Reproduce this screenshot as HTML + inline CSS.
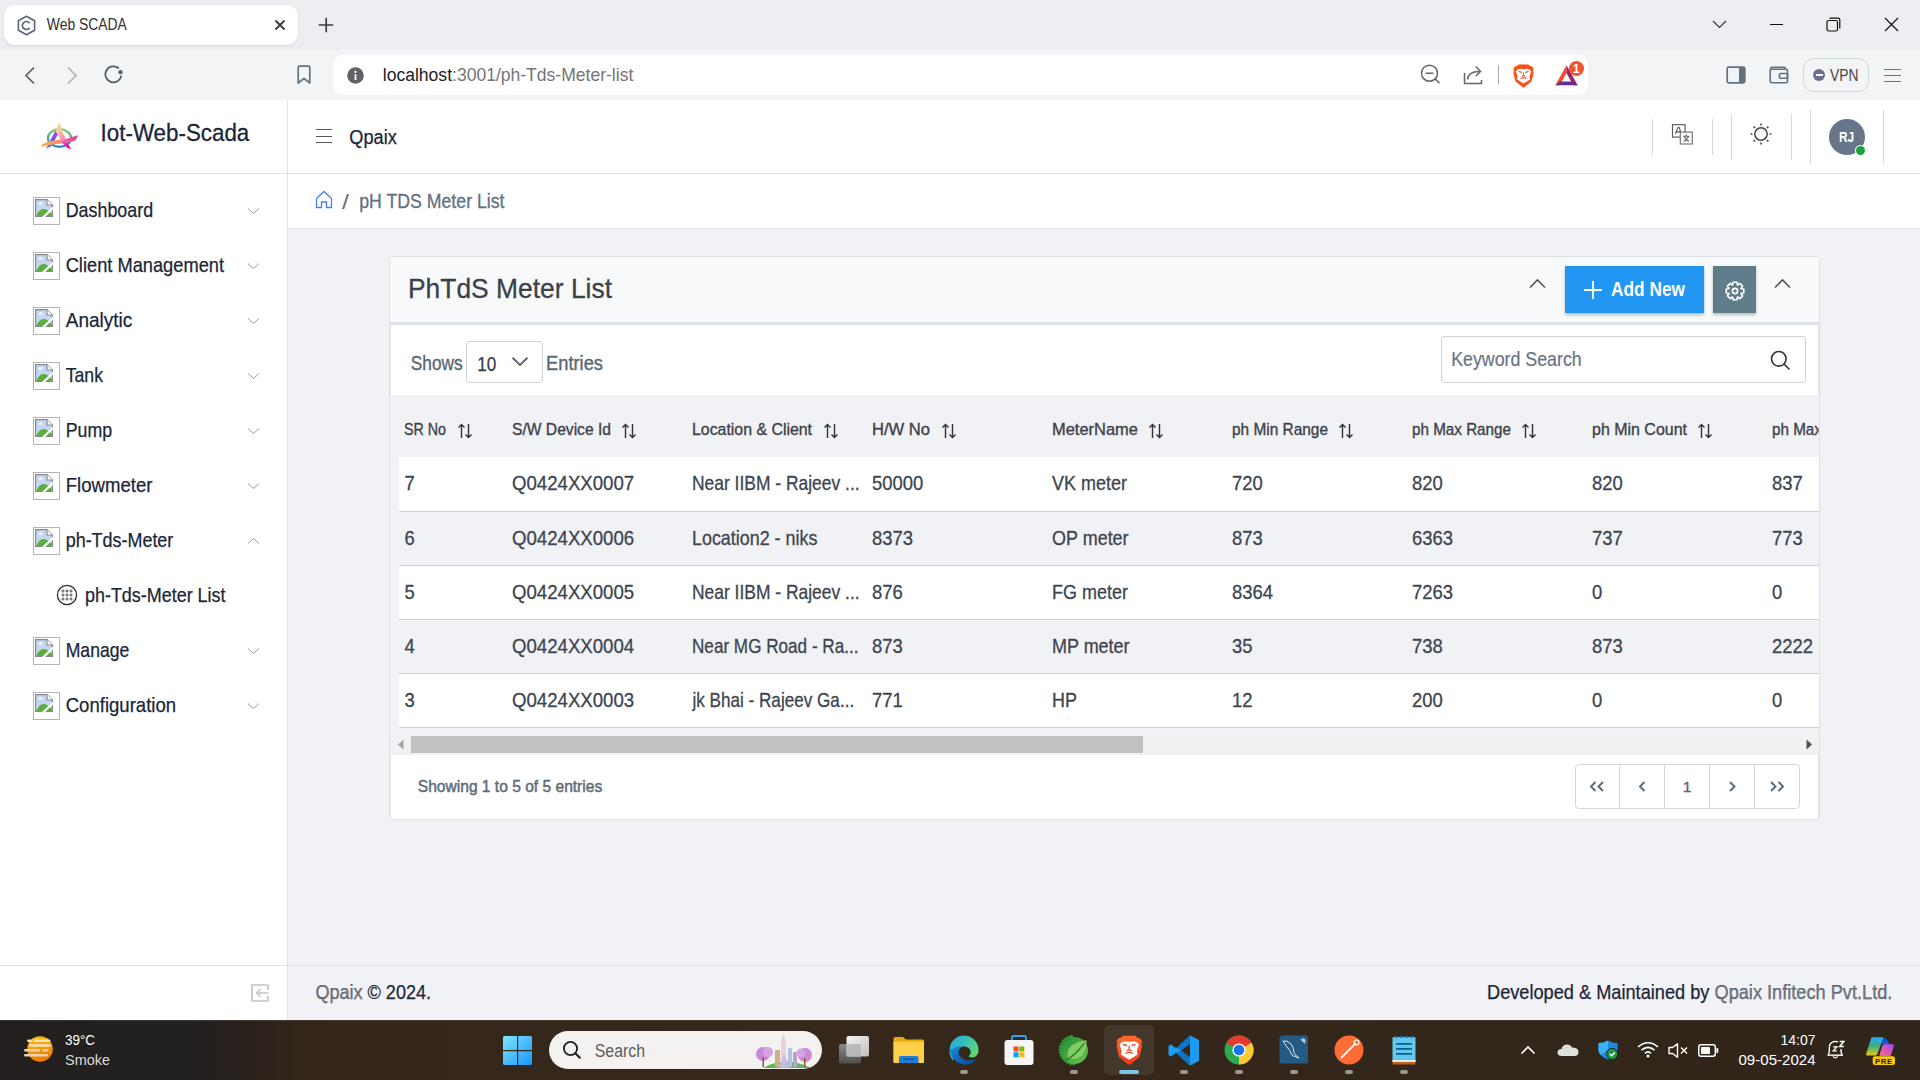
<!DOCTYPE html>
<html><head><meta charset="utf-8">
<style>
*{margin:0;padding:0;box-sizing:border-box}
html,body{width:1920px;height:1080px;overflow:hidden;font-family:"Liberation Sans",sans-serif;background:#f1f2f6;position:relative}
.a{position:absolute}
.t{position:absolute;white-space:nowrap;line-height:1}
svg{position:absolute;overflow:visible}

</style></head><body>
<div class="a" style="left:0px;top:0px;width:1920px;height:50px;background:#eceef2;"></div>
<div class="a" style="left:0px;top:50px;width:1920px;height:50px;background:#f3f4f6;"></div>
<div class="a" style="left:4px;top:5px;width:294px;height:40px;background:#fff;border-radius:11px;box-shadow:0 1px 3px rgba(0,0,0,.10)"></div>
<svg style="left:17px;top:15px" width="19" height="21" viewBox="0 0 19 21"><path d="M9.5 1.2 L17.6 5.8 V15.2 L9.5 19.8 L1.4 15.2 V5.8 Z" fill="none" stroke="#5b6478" stroke-width="1.6" stroke-linejoin="round"/><path d="M12.6 8.2 A4 4 0 1 0 12.6 12.8" fill="none" stroke="#5b6478" stroke-width="1.7"/></svg>
<svg style="left:274px;top:19px" width="12" height="12" viewBox="0 0 12 12"><path d="M1.5 1.5 L10.5 10.5 M10.5 1.5 L1.5 10.5" stroke="#3a3d42" stroke-width="1.9"/></svg>
<svg style="left:318px;top:17px" width="16" height="16" viewBox="0 0 16 16"><path d="M8.2 0.8 V15.2 M0.8 8 H15.2" stroke="#3a3d42" stroke-width="1.7"/></svg>
<svg style="left:1712px;top:20px" width="15" height="9" viewBox="0 0 15 9"><path d="M1 1 L7.5 7.5 L14 1" fill="none" stroke="#333" stroke-width="1.2"/></svg>
<div class="a" style="left:1770px;top:24px;width:13px;height:1.3px;background:#111;"></div>
<svg style="left:1826px;top:17px" width="15" height="15" viewBox="0 0 15 15"><rect x="1" y="3.5" width="10.5" height="10.5" rx="1.8" fill="none" stroke="#111" stroke-width="1.2"/><path d="M3.5 1.2 H11.8 A2 2 0 0 1 13.8 3.2 V11.5" fill="none" stroke="#111" stroke-width="1.2"/></svg>
<svg style="left:1884px;top:17px" width="15" height="15" viewBox="0 0 15 15"><path d="M1 1 L14 14 M14 1 L1 14" stroke="#111" stroke-width="1.2"/></svg>
<svg style="left:24px;top:66px" width="12" height="19" viewBox="0 0 12 19"><path d="M10 1.5 L2 9.5 L10 17.5" fill="none" stroke="#4f5f68" stroke-width="1.7"/></svg>
<svg style="left:66px;top:66px" width="12" height="19" viewBox="0 0 12 19"><path d="M2 1.5 L10 9.5 L2 17.5" fill="none" stroke="#aab4ba" stroke-width="1.7"/></svg>
<svg style="left:103px;top:64px" width="22" height="22" viewBox="0 0 22 22"><path d="M18.3 11.5 A8 8 0 1 1 15.8 4.5" fill="none" stroke="#4f5f68" stroke-width="1.7"/><circle cx="17.5" cy="8.2" r="2.1" fill="#4f5f68"/></svg>
<svg style="left:296px;top:65px" width="16" height="20" viewBox="0 0 16 20"><path d="M2.2 2.5 Q2.2 1.2 3.5 1.2 H12.5 Q13.8 1.2 13.8 2.5 V18 L8 13.5 L2.2 18 Z" fill="none" stroke="#5f7480" stroke-width="1.7" stroke-linejoin="round"/></svg>
<div class="a" style="left:333px;top:55px;width:1255px;height:40px;background:#fff;border-radius:10px"></div>
<svg style="left:347px;top:67px" width="18" height="18" viewBox="0 0 18 18"><circle cx="8.5" cy="8.5" r="8.3" fill="#5f6368"/><rect x="7.6" y="7.2" width="1.8" height="5.8" fill="#fff"/><circle cx="8.5" cy="4.9" r="1.1" fill="#fff"/></svg>
<svg style="left:1419px;top:63px" width="22" height="22" viewBox="0 0 22 22"><circle cx="10.5" cy="10.2" r="8" fill="none" stroke="#666" stroke-width="1.5"/><path d="M6.6 10.2 H14.4 M16.2 15.9 L20.5 20.2" stroke="#666" stroke-width="1.5"/></svg>
<svg style="left:1462px;top:64px" width="22" height="22" viewBox="0 0 22 22"><path d="M2.5 9 V19.5 H19.5 V16" fill="none" stroke="#666" stroke-width="1.5" stroke-linejoin="round"/><path d="M5.5 15.5 Q6 7.5 17.5 7.5" fill="none" stroke="#666" stroke-width="1.5"/><path d="M13.8 2.5 L18.5 7.5 L13.8 12" fill="none" stroke="#666" stroke-width="1.5"/></svg>
<div class="a" style="left:1498px;top:65px;width:1.3px;height:19px;background:#aaa;"></div>
<svg style="left:1512.5px;top:63.5px" width="21" height="24" viewBox="0 0 21 24"><path d="M5.5 0.5 H15.5 L17 2 L19.2 2.6 L20.6 4.8 L20 7 L20.6 9 L18.5 17.5 L11.2 23.2 Q10.5 23.8 9.8 23.2 L2.5 17.5 L0.4 9 L1 7 L0.4 4.8 L1.8 2.6 L4 2 Z" fill="#fb4f14"/><path d="M2.8 7.2 Q5 4.5 7.5 4.8 Q10.5 5.6 13.5 4.8 Q16 4.5 18.2 7.2 L16.5 12.5 L17 15.5 L10.5 19.5 L4 15.5 L4.5 12.5 Z" fill="#fff"/><path d="M5.5 7.5 L8.8 8.3 M15.5 7.5 L12.2 8.3" stroke="#fb4f14" stroke-width="1.2"/><path d="M10.5 8.5 V12 M8.5 12.5 L10.5 11.5 L12.5 12.5 M7.5 14.5 L10.5 13.5 L13.5 14.5" fill="none" stroke="#fb4f14" stroke-width="1.1"/></svg>
<svg style="left:1554.5px;top:64.8px" width="23" height="20.5" viewBox="0 0 23 20.5"><path d="M11.5 0.3 L0.3 20.2 H4.8 L11.5 8 Z" fill="#ff4724"/><path d="M11.5 0.3 L22.7 20.2 H18.2 L11.5 8 Z" fill="#9e1f63"/><path d="M0.3 20.2 L4.8 16.4 H18.2 L22.7 20.2 Z" fill="#662d91"/></svg>
<div class="a" style="left:1568.7px;top:60.5px;width:15px;height:15px;border-radius:50%;background:#f4532c"></div>
<svg style="left:1726px;top:66px" width="20" height="18" viewBox="0 0 20 18"><rect x="1.2" y="1.2" width="17.6" height="15.6" rx="1.5" fill="none" stroke="#5f7480" stroke-width="1.7"/><rect x="13" y="1.2" width="5.8" height="15.6" fill="#5f7480"/></svg>
<svg style="left:1769px;top:66px" width="20" height="18" viewBox="0 0 20 18"><rect x="1.2" y="3.2" width="17.3" height="13.6" rx="1.5" fill="none" stroke="#5f7480" stroke-width="1.6"/><path d="M1.5 3.5 Q1.5 1.2 3.5 1.2 H15 Q16.5 1.2 16.5 3" fill="none" stroke="#5f7480" stroke-width="1.6"/><rect x="10.5" y="7.5" width="8" height="4.8" rx="1" fill="none" stroke="#5f7480" stroke-width="1.6"/></svg>
<div class="a" style="left:1803px;top:58px;width:66px;height:34px;background:transparent;border:1px solid #ccdadf;border-radius:11px"></div>
<div class="a" style="left:1813px;top:69px;width:12px;height:12px;border-radius:50%;background:#6b6f93"></div>
<div class="a" style="left:1815.5px;top:74.2px;width:7px;height:2px;background:#fff;"></div>
<div class="a" style="left:1884px;top:68.5px;width:17px;height:1.5px;background:#60757e;"></div>
<div class="a" style="left:1884px;top:74.5px;width:17px;height:1.5px;background:#60757e;"></div>
<div class="a" style="left:1884px;top:80.5px;width:17px;height:1.5px;background:#60757e;"></div>
<div class="a" style="left:0px;top:100px;width:1920px;height:73px;background:#fff;"></div>
<div class="a" style="left:0px;top:173px;width:1920px;height:1px;background:#dfe3ea;"></div>
<div class="a" style="left:287px;top:100px;width:1px;height:920px;background:#dfe3ea;"></div>
<svg style="left:38px;top:118px" width="44" height="36" viewBox="0 0 44 36">
<defs><linearGradient id="lg_ring" x1="0" y1="0" x2="0" y2="1"><stop offset="0" stop-color="#86c46e"/><stop offset=".55" stop-color="#4aa58c"/><stop offset="1" stop-color="#2388c8"/></linearGradient>
<linearGradient id="lg_left" x1="0" y1="0" x2="0" y2="1"><stop offset="0" stop-color="#9b4dff"/><stop offset=".6" stop-color="#6a4fe0"/><stop offset="1" stop-color="#2f9bff"/></linearGradient>
<linearGradient id="lg_right" x1="0" y1="0" x2="0.3" y2="1"><stop offset="0" stop-color="#ffe27a"/><stop offset=".35" stop-color="#fdc3a0"/><stop offset=".7" stop-color="#f58ab8"/><stop offset="1" stop-color="#e010b0"/></linearGradient>
<linearGradient id="lg_sw" x1="0" y1="0" x2="1" y2="0"><stop offset="0" stop-color="#ffb23a"/><stop offset=".5" stop-color="#ff8a6a"/><stop offset=".75" stop-color="#f3559e"/><stop offset="1" stop-color="#e83a9a"/></linearGradient></defs>
<ellipse cx="21.5" cy="20" rx="11.6" ry="8.8" fill="none" stroke="url(#lg_ring)" stroke-width="2.2"/>
<path d="M17.4 12.6 L19.8 16.5 L13.5 28 L8 31 Z" fill="url(#lg_left)"/>
<path d="M3 27.6 Q7 23.5 17 22.3 L27 21.2 L39.6 17.2 Q39.5 21 36 23 Q30 24.8 22 25.6 Q12 26.6 4.2 28.8 Z" fill="url(#lg_sw)"/>
<path d="M21 4.8 Q22.5 6 23.6 11.5 L29.2 24.5 L33.4 31.2 Q31 30.8 29 29.8 L24.2 25 L18 12.6 Q19.5 7.5 21 4.8 Z" fill="url(#lg_right)"/>
</svg>
<div class="a" style="left:316px;top:129px;width:16px;height:1.4px;background:#555;"></div>
<div class="a" style="left:316px;top:135.5px;width:16px;height:1.4px;background:#555;"></div>
<div class="a" style="left:316px;top:142px;width:16px;height:1.4px;background:#555;"></div>
<div class="a" style="left:1652px;top:119px;width:1px;height:36px;background:#d9d9d9;"></div>
<div class="a" style="left:1712px;top:119px;width:1px;height:36px;background:#d9d9d9;"></div>
<div class="a" style="left:1731px;top:114px;width:1px;height:46px;background:#d9d9d9;"></div>
<div class="a" style="left:1791px;top:114px;width:1px;height:46px;background:#d9d9d9;"></div>
<div class="a" style="left:1810px;top:110px;width:1px;height:54px;background:#d9d9d9;"></div>
<div class="a" style="left:1883px;top:110px;width:1px;height:54px;background:#d9d9d9;"></div>
<svg style="left:1671px;top:123px" width="23" height="23" viewBox="0 0 23 23"><rect x="1.5" y="1.7" width="12.6" height="12.4" fill="#fff" stroke="#5a5a5a" stroke-width="1.15"/><path d="M4.3 10.8 L7 4.6 Q7.6 3.8 8.2 4.6 L9.6 8.6 M5.3 8.9 H9.7" fill="none" stroke="#555" stroke-width="1.1"/><rect x="9.3" y="9.1" width="12" height="11.9" fill="#fff" stroke="#777" stroke-width="1.2"/><path d="M15.2 11.2 V12.8 M12.2 13.3 H18.6 M13.4 13.7 Q15 17.5 18 18.4 M17.3 13.7 Q15.8 17.5 12.6 18.4" fill="none" stroke="#6a6a6a" stroke-width="1.1"/></svg>
<svg style="left:1750px;top:123px" width="22" height="22" viewBox="0 0 22 22"><circle cx="11" cy="11" r="6.2" fill="none" stroke="#444" stroke-width="1.5"/><path d="M19.60 11.00 L21.40 11.00" stroke="#444" stroke-width="1.6"/><path d="M17.08 17.08 L18.35 18.35" stroke="#444" stroke-width="1.6"/><path d="M11.00 19.60 L11.00 21.40" stroke="#444" stroke-width="1.6"/><path d="M4.92 17.08 L3.65 18.35" stroke="#444" stroke-width="1.6"/><path d="M2.40 11.00 L0.60 11.00" stroke="#444" stroke-width="1.6"/><path d="M4.92 4.92 L3.65 3.65" stroke="#444" stroke-width="1.6"/><path d="M11.00 2.40 L11.00 0.60" stroke="#444" stroke-width="1.6"/><path d="M17.08 4.92 L18.35 3.65" stroke="#444" stroke-width="1.6"/></svg>
<div class="a" style="left:1829px;top:119px;width:36px;height:36px;border-radius:50%;background:#67768a"></div>
<div class="a" style="left:1855.5px;top:145.5px;width:9px;height:9px;border-radius:50%;background:#1d9e3c;box-shadow:0 0 0 1px #fff"></div>
<div class="a" style="left:0px;top:174px;width:287px;height:846px;background:#fff;"></div>
<div class="a" style="left:33px;top:197.0px;width:27px;height:28px;border:1px solid #b4b4b4;background:#fff"></div>
<svg style="left:35px;top:199.0px" width="18" height="18" viewBox="0 0 18 18"><path d="M0.6 0.6 H12 L17.4 6 V17.4 H0.6 Z" fill="#c3d6f2" stroke="#8a8a8a" stroke-width="1.2"/><path d="M12 0.6 V6 H17.4" fill="#fff" stroke="#8a8a8a" stroke-width="1.2"/><path d="M1.2 17 Q4.5 9.5 9 10 Q13 10.5 16.8 15 V17 H1.2 Z" fill="#5aaf3a"/><path d="M2.8 5.5 L5.5 2.8 L8.2 5.5 Z" fill="#fff"/><path d="M8 18.5 L18.5 8.5" stroke="#fff" stroke-width="2.2"/></svg>
<svg style="left:247px;top:206.8px" width="13" height="8" viewBox="0 0 13 8"><path d="M1 1.5 L6.5 6.5 L12 1.5" fill="none" stroke="#9a9a9a" stroke-width="1"/></svg>
<div class="a" style="left:33px;top:252.0px;width:27px;height:28px;border:1px solid #b4b4b4;background:#fff"></div>
<svg style="left:35px;top:254.0px" width="18" height="18" viewBox="0 0 18 18"><path d="M0.6 0.6 H12 L17.4 6 V17.4 H0.6 Z" fill="#c3d6f2" stroke="#8a8a8a" stroke-width="1.2"/><path d="M12 0.6 V6 H17.4" fill="#fff" stroke="#8a8a8a" stroke-width="1.2"/><path d="M1.2 17 Q4.5 9.5 9 10 Q13 10.5 16.8 15 V17 H1.2 Z" fill="#5aaf3a"/><path d="M2.8 5.5 L5.5 2.8 L8.2 5.5 Z" fill="#fff"/><path d="M8 18.5 L18.5 8.5" stroke="#fff" stroke-width="2.2"/></svg>
<svg style="left:247px;top:261.8px" width="13" height="8" viewBox="0 0 13 8"><path d="M1 1.5 L6.5 6.5 L12 1.5" fill="none" stroke="#9a9a9a" stroke-width="1"/></svg>
<div class="a" style="left:33px;top:307.0px;width:27px;height:28px;border:1px solid #b4b4b4;background:#fff"></div>
<svg style="left:35px;top:309.0px" width="18" height="18" viewBox="0 0 18 18"><path d="M0.6 0.6 H12 L17.4 6 V17.4 H0.6 Z" fill="#c3d6f2" stroke="#8a8a8a" stroke-width="1.2"/><path d="M12 0.6 V6 H17.4" fill="#fff" stroke="#8a8a8a" stroke-width="1.2"/><path d="M1.2 17 Q4.5 9.5 9 10 Q13 10.5 16.8 15 V17 H1.2 Z" fill="#5aaf3a"/><path d="M2.8 5.5 L5.5 2.8 L8.2 5.5 Z" fill="#fff"/><path d="M8 18.5 L18.5 8.5" stroke="#fff" stroke-width="2.2"/></svg>
<svg style="left:247px;top:316.8px" width="13" height="8" viewBox="0 0 13 8"><path d="M1 1.5 L6.5 6.5 L12 1.5" fill="none" stroke="#9a9a9a" stroke-width="1"/></svg>
<div class="a" style="left:33px;top:362.0px;width:27px;height:28px;border:1px solid #b4b4b4;background:#fff"></div>
<svg style="left:35px;top:364.0px" width="18" height="18" viewBox="0 0 18 18"><path d="M0.6 0.6 H12 L17.4 6 V17.4 H0.6 Z" fill="#c3d6f2" stroke="#8a8a8a" stroke-width="1.2"/><path d="M12 0.6 V6 H17.4" fill="#fff" stroke="#8a8a8a" stroke-width="1.2"/><path d="M1.2 17 Q4.5 9.5 9 10 Q13 10.5 16.8 15 V17 H1.2 Z" fill="#5aaf3a"/><path d="M2.8 5.5 L5.5 2.8 L8.2 5.5 Z" fill="#fff"/><path d="M8 18.5 L18.5 8.5" stroke="#fff" stroke-width="2.2"/></svg>
<svg style="left:247px;top:371.8px" width="13" height="8" viewBox="0 0 13 8"><path d="M1 1.5 L6.5 6.5 L12 1.5" fill="none" stroke="#9a9a9a" stroke-width="1"/></svg>
<div class="a" style="left:33px;top:417.0px;width:27px;height:28px;border:1px solid #b4b4b4;background:#fff"></div>
<svg style="left:35px;top:419.0px" width="18" height="18" viewBox="0 0 18 18"><path d="M0.6 0.6 H12 L17.4 6 V17.4 H0.6 Z" fill="#c3d6f2" stroke="#8a8a8a" stroke-width="1.2"/><path d="M12 0.6 V6 H17.4" fill="#fff" stroke="#8a8a8a" stroke-width="1.2"/><path d="M1.2 17 Q4.5 9.5 9 10 Q13 10.5 16.8 15 V17 H1.2 Z" fill="#5aaf3a"/><path d="M2.8 5.5 L5.5 2.8 L8.2 5.5 Z" fill="#fff"/><path d="M8 18.5 L18.5 8.5" stroke="#fff" stroke-width="2.2"/></svg>
<svg style="left:247px;top:426.8px" width="13" height="8" viewBox="0 0 13 8"><path d="M1 1.5 L6.5 6.5 L12 1.5" fill="none" stroke="#9a9a9a" stroke-width="1"/></svg>
<div class="a" style="left:33px;top:472.0px;width:27px;height:28px;border:1px solid #b4b4b4;background:#fff"></div>
<svg style="left:35px;top:474.0px" width="18" height="18" viewBox="0 0 18 18"><path d="M0.6 0.6 H12 L17.4 6 V17.4 H0.6 Z" fill="#c3d6f2" stroke="#8a8a8a" stroke-width="1.2"/><path d="M12 0.6 V6 H17.4" fill="#fff" stroke="#8a8a8a" stroke-width="1.2"/><path d="M1.2 17 Q4.5 9.5 9 10 Q13 10.5 16.8 15 V17 H1.2 Z" fill="#5aaf3a"/><path d="M2.8 5.5 L5.5 2.8 L8.2 5.5 Z" fill="#fff"/><path d="M8 18.5 L18.5 8.5" stroke="#fff" stroke-width="2.2"/></svg>
<svg style="left:247px;top:481.8px" width="13" height="8" viewBox="0 0 13 8"><path d="M1 1.5 L6.5 6.5 L12 1.5" fill="none" stroke="#9a9a9a" stroke-width="1"/></svg>
<div class="a" style="left:33px;top:527.0px;width:27px;height:28px;border:1px solid #b4b4b4;background:#fff"></div>
<svg style="left:35px;top:529.0px" width="18" height="18" viewBox="0 0 18 18"><path d="M0.6 0.6 H12 L17.4 6 V17.4 H0.6 Z" fill="#c3d6f2" stroke="#8a8a8a" stroke-width="1.2"/><path d="M12 0.6 V6 H17.4" fill="#fff" stroke="#8a8a8a" stroke-width="1.2"/><path d="M1.2 17 Q4.5 9.5 9 10 Q13 10.5 16.8 15 V17 H1.2 Z" fill="#5aaf3a"/><path d="M2.8 5.5 L5.5 2.8 L8.2 5.5 Z" fill="#fff"/><path d="M8 18.5 L18.5 8.5" stroke="#fff" stroke-width="2.2"/></svg>
<svg style="left:247px;top:536.8px" width="13" height="8" viewBox="0 0 13 8"><path d="M1 6.5 L6.5 1.5 L12 6.5" fill="none" stroke="#9a9a9a" stroke-width="1"/></svg>
<svg style="left:56px;top:583.5px" width="22" height="22" viewBox="0 0 22 22"><circle cx="11" cy="11" r="9.6" fill="none" stroke="#2b2f36" stroke-width="1.3"/><circle cx="7" cy="7" r="1.05" fill="none" stroke="#2b2f36" stroke-width=".8"/><circle cx="7" cy="11" r="1.05" fill="none" stroke="#2b2f36" stroke-width=".8"/><circle cx="7" cy="15" r="1.05" fill="none" stroke="#2b2f36" stroke-width=".8"/><circle cx="11" cy="7" r="1.05" fill="none" stroke="#2b2f36" stroke-width=".8"/><circle cx="11" cy="11" r="1.05" fill="none" stroke="#2b2f36" stroke-width=".8"/><circle cx="11" cy="15" r="1.05" fill="none" stroke="#2b2f36" stroke-width=".8"/><circle cx="15" cy="7" r="1.05" fill="none" stroke="#2b2f36" stroke-width=".8"/><circle cx="15" cy="11" r="1.05" fill="none" stroke="#2b2f36" stroke-width=".8"/><circle cx="15" cy="15" r="1.05" fill="none" stroke="#2b2f36" stroke-width=".8"/></svg>
<div class="a" style="left:33px;top:637.0px;width:27px;height:28px;border:1px solid #b4b4b4;background:#fff"></div>
<svg style="left:35px;top:639.0px" width="18" height="18" viewBox="0 0 18 18"><path d="M0.6 0.6 H12 L17.4 6 V17.4 H0.6 Z" fill="#c3d6f2" stroke="#8a8a8a" stroke-width="1.2"/><path d="M12 0.6 V6 H17.4" fill="#fff" stroke="#8a8a8a" stroke-width="1.2"/><path d="M1.2 17 Q4.5 9.5 9 10 Q13 10.5 16.8 15 V17 H1.2 Z" fill="#5aaf3a"/><path d="M2.8 5.5 L5.5 2.8 L8.2 5.5 Z" fill="#fff"/><path d="M8 18.5 L18.5 8.5" stroke="#fff" stroke-width="2.2"/></svg>
<svg style="left:247px;top:646.8px" width="13" height="8" viewBox="0 0 13 8"><path d="M1 1.5 L6.5 6.5 L12 1.5" fill="none" stroke="#9a9a9a" stroke-width="1"/></svg>
<div class="a" style="left:33px;top:692.0px;width:27px;height:28px;border:1px solid #b4b4b4;background:#fff"></div>
<svg style="left:35px;top:694.0px" width="18" height="18" viewBox="0 0 18 18"><path d="M0.6 0.6 H12 L17.4 6 V17.4 H0.6 Z" fill="#c3d6f2" stroke="#8a8a8a" stroke-width="1.2"/><path d="M12 0.6 V6 H17.4" fill="#fff" stroke="#8a8a8a" stroke-width="1.2"/><path d="M1.2 17 Q4.5 9.5 9 10 Q13 10.5 16.8 15 V17 H1.2 Z" fill="#5aaf3a"/><path d="M2.8 5.5 L5.5 2.8 L8.2 5.5 Z" fill="#fff"/><path d="M8 18.5 L18.5 8.5" stroke="#fff" stroke-width="2.2"/></svg>
<svg style="left:247px;top:701.8px" width="13" height="8" viewBox="0 0 13 8"><path d="M1 1.5 L6.5 6.5 L12 1.5" fill="none" stroke="#9a9a9a" stroke-width="1"/></svg>
<div class="a" style="left:0px;top:965px;width:287px;height:1px;background:#dfe3ea;"></div>
<svg style="left:251px;top:984px" width="18" height="18" viewBox="0 0 18 18"><path d="M17 6 V1 H1 V17 H17 V12" fill="none" stroke="#c4c4c4" stroke-width="1.7"/><path d="M17.5 9 H5.5 M9.5 5 L5.5 9 L9.5 13" fill="none" stroke="#c4c4c4" stroke-width="1.5"/></svg>
<div class="a" style="left:288px;top:174px;width:1632px;height:54px;background:#fff;"></div>
<div class="a" style="left:288px;top:228px;width:1632px;height:1px;background:#dfe3ea;"></div>
<svg style="left:315px;top:190px" width="18" height="19" viewBox="0 0 18 19"><path d="M1.5 17.5 V8.5 L9 1.5 L16.5 8.5 V17.5 H11.5 V12 H6.5 V17.5 Z" fill="none" stroke="#4a7ff0" stroke-width="1.3" stroke-linejoin="miter"/></svg>
<div class="a" style="left:288px;top:965px;width:1632px;height:1px;background:#dfe3ea;"></div>
<div class="a" style="left:389px;top:256px;width:1431px;height:564px;background:#fff;border:1px solid #dde1e7;border-radius:3px"></div>
<div class="a" style="left:390px;top:257px;width:1429px;height:65px;background:#f8f9fb;border-radius:3px 3px 0 0"></div>
<div class="a" style="left:390px;top:322px;width:1429px;height:3px;background:#dde1e7;"></div>
<div class="a" style="left:390px;top:325px;width:1px;height:494px;background:#e3e6eb;"></div>
<div class="a" style="left:1818px;top:325px;width:1px;height:494px;background:#e3e6eb;"></div>
<svg style="left:1529px;top:278px" width="17" height="11" viewBox="0 0 17 11"><path d="M1 9.5 L8.5 2 L16 9.5" fill="none" stroke="#555" stroke-width="1.6"/></svg>
<svg style="left:1774px;top:278px" width="17" height="11" viewBox="0 0 17 11"><path d="M1 9.5 L8.5 2 L16 9.5" fill="none" stroke="#555" stroke-width="1.6"/></svg>
<div class="a" style="left:1565px;top:266px;width:139px;height:47px;background:#2196f3;box-shadow:0 2px 3px rgba(0,0,0,.25)"></div>
<svg style="left:1584px;top:281px" width="18" height="18" viewBox="0 0 18 18"><path d="M9 0 V18 M0 9 H18" stroke="#fff" stroke-width="1.8"/></svg>
<div class="a" style="left:1713px;top:266px;width:43px;height:47px;background:#607d8b;box-shadow:0 2px 3px rgba(0,0,0,.25)"></div>
<svg style="left:1724.5px;top:281px" width="20" height="20" viewBox="0 0 20 20"><path fill="none" stroke="#fff" stroke-width="1.6" stroke-linejoin="round" d="M7.67 3.82 L8.04 1.22 L11.96 1.22 L12.33 3.82 A6.6 6.6 0 0 1 12.72 3.99 L14.82 2.40 L17.60 5.18 L16.01 7.28 A6.6 6.6 0 0 1 16.18 7.67 L18.78 8.04 L18.78 11.96 L16.18 12.33 A6.6 6.6 0 0 1 16.01 12.72 L17.60 14.82 L14.82 17.60 L12.72 16.01 A6.6 6.6 0 0 1 12.33 16.18 L11.96 18.78 L8.04 18.78 L7.67 16.18 A6.6 6.6 0 0 1 7.28 16.01 L5.18 17.60 L2.40 14.82 L3.99 12.72 A6.6 6.6 0 0 1 3.82 12.33 L1.22 11.96 L1.22 8.04 L3.82 7.67 A6.6 6.6 0 0 1 3.99 7.28 L2.40 5.18 L5.18 2.40 L7.28 3.99 A6.6 6.6 0 0 1 7.67 3.82 Z"/><circle cx="10" cy="10" r="2.6" fill="none" stroke="#fff" stroke-width="1.6"/></svg>
<div class="a" style="left:466px;top:341px;width:77px;height:42px;background:#fff;border:1px solid #ced4da;border-radius:3px"></div>
<svg style="left:511px;top:356px" width="18" height="11" viewBox="0 0 18 11"><path d="M1.5 1.8 L9 9 L16.5 1.8" fill="none" stroke="#5a646e" stroke-width="1.9"/></svg>
<div class="a" style="left:1441px;top:336px;width:365px;height:47px;background:#fff;border:1px solid #ced4da;border-radius:3px"></div>
<svg style="left:1770px;top:350px" width="21" height="21" viewBox="0 0 21 21"><circle cx="8.8" cy="8.8" r="7.3" fill="none" stroke="#333" stroke-width="1.6"/><path d="M14 14 L19.5 19.5" stroke="#333" stroke-width="1.6"/></svg>
<div class="a" style="left:390px;top:395px;width:1429px;height:360px;background:#f1f2f6;"></div>
<svg style="left:457px;top:423px" width="16" height="16" viewBox="0 0 16 16"><path d="M4.5 15 V1.5 M1.5 4.5 L4.5 1.5 L7.5 4.5" fill="none" stroke="#333" stroke-width="1.4"/><path d="M11.5 1 V14.5 M8.5 11.5 L11.5 14.5 L14.5 11.5" fill="none" stroke="#333" stroke-width="1.4"/></svg>
<svg style="left:621px;top:423px" width="16" height="16" viewBox="0 0 16 16"><path d="M4.5 15 V1.5 M1.5 4.5 L4.5 1.5 L7.5 4.5" fill="none" stroke="#333" stroke-width="1.4"/><path d="M11.5 1 V14.5 M8.5 11.5 L11.5 14.5 L14.5 11.5" fill="none" stroke="#333" stroke-width="1.4"/></svg>
<svg style="left:823px;top:423px" width="16" height="16" viewBox="0 0 16 16"><path d="M4.5 15 V1.5 M1.5 4.5 L4.5 1.5 L7.5 4.5" fill="none" stroke="#333" stroke-width="1.4"/><path d="M11.5 1 V14.5 M8.5 11.5 L11.5 14.5 L14.5 11.5" fill="none" stroke="#333" stroke-width="1.4"/></svg>
<svg style="left:941px;top:423px" width="16" height="16" viewBox="0 0 16 16"><path d="M4.5 15 V1.5 M1.5 4.5 L4.5 1.5 L7.5 4.5" fill="none" stroke="#333" stroke-width="1.4"/><path d="M11.5 1 V14.5 M8.5 11.5 L11.5 14.5 L14.5 11.5" fill="none" stroke="#333" stroke-width="1.4"/></svg>
<svg style="left:1148px;top:423px" width="16" height="16" viewBox="0 0 16 16"><path d="M4.5 15 V1.5 M1.5 4.5 L4.5 1.5 L7.5 4.5" fill="none" stroke="#333" stroke-width="1.4"/><path d="M11.5 1 V14.5 M8.5 11.5 L11.5 14.5 L14.5 11.5" fill="none" stroke="#333" stroke-width="1.4"/></svg>
<svg style="left:1338px;top:423px" width="16" height="16" viewBox="0 0 16 16"><path d="M4.5 15 V1.5 M1.5 4.5 L4.5 1.5 L7.5 4.5" fill="none" stroke="#333" stroke-width="1.4"/><path d="M11.5 1 V14.5 M8.5 11.5 L11.5 14.5 L14.5 11.5" fill="none" stroke="#333" stroke-width="1.4"/></svg>
<svg style="left:1521px;top:423px" width="16" height="16" viewBox="0 0 16 16"><path d="M4.5 15 V1.5 M1.5 4.5 L4.5 1.5 L7.5 4.5" fill="none" stroke="#333" stroke-width="1.4"/><path d="M11.5 1 V14.5 M8.5 11.5 L11.5 14.5 L14.5 11.5" fill="none" stroke="#333" stroke-width="1.4"/></svg>
<svg style="left:1697px;top:423px" width="16" height="16" viewBox="0 0 16 16"><path d="M4.5 15 V1.5 M1.5 4.5 L4.5 1.5 L7.5 4.5" fill="none" stroke="#333" stroke-width="1.4"/><path d="M11.5 1 V14.5 M8.5 11.5 L11.5 14.5 L14.5 11.5" fill="none" stroke="#333" stroke-width="1.4"/></svg>
<div class="a" style="left:399px;top:457px;width:1420px;height:55px;background:#fff;border-bottom:1px solid #cfd1d5"></div>
<div class="a" style="left:399px;top:512px;width:1420px;height:54px;background:#f1f2f6;border-bottom:1px solid #cfd1d5"></div>
<div class="a" style="left:399px;top:566px;width:1420px;height:54px;background:#fff;border-bottom:1px solid #cfd1d5"></div>
<div class="a" style="left:399px;top:620px;width:1420px;height:54px;background:#f1f2f6;border-bottom:1px solid #cfd1d5"></div>
<div class="a" style="left:399px;top:674px;width:1420px;height:54px;background:#fff;border-bottom:1px solid #cfd1d5"></div>
<div class="a" style="left:390px;top:734px;width:1429px;height:21px;background:#f1f1f1;"></div>
<div class="a" style="left:411px;top:736px;width:732px;height:17px;background:#c1c1c1;"></div>
<svg style="left:397px;top:739px" width="8" height="11" viewBox="0 0 8 11"><path d="M6.5 0.5 V10.5 L1 5.5 Z" fill="#a3a3a3"/></svg>
<svg style="left:1805px;top:739px" width="8" height="11" viewBox="0 0 8 11"><path d="M1.5 0.5 V10.5 L7 5.5 Z" fill="#505050"/></svg>
<div class="a" style="left:1575px;top:764px;width:225px;height:45px;background:#fff;border:1px solid #d4d7dc;border-radius:4px"></div>
<div class="a" style="left:1619px;top:765px;width:1px;height:43px;background:#d4d7dc;"></div>
<div class="a" style="left:1664px;top:765px;width:1px;height:43px;background:#d4d7dc;"></div>
<div class="a" style="left:1709px;top:765px;width:1px;height:43px;background:#d4d7dc;"></div>
<div class="a" style="left:1754px;top:765px;width:1px;height:43px;background:#d4d7dc;"></div>
<svg style="left:1590px;top:780.5px" width="15" height="11" viewBox="0 0 15 11"><path d="M5.5 1 L1 5.5 L5.5 10" fill="none" stroke="#5a6978" stroke-width="1.9"/><g transform="translate(7.5 0)"><path d="M5.5 1 L1 5.5 L5.5 10" fill="none" stroke="#5a6978" stroke-width="1.9"/></g></svg>
<svg style="left:1638.5px;top:780.5px" width="7" height="11" viewBox="0 0 7 11"><path d="M5.5 1 L1 5.5 L5.5 10" fill="none" stroke="#5a6978" stroke-width="1.9"/></svg>
<svg style="left:1728.8px;top:780.5px" width="7" height="11" viewBox="0 0 7 11"><path d="M1 1 L5.5 5.5 L1 10" fill="none" stroke="#5a6978" stroke-width="1.9"/></svg>
<svg style="left:1770px;top:780.5px" width="15" height="11" viewBox="0 0 15 11"><path d="M1 1 L5.5 5.5 L1 10" fill="none" stroke="#5a6978" stroke-width="1.9"/><g transform="translate(7.5 0)"><path d="M1 1 L5.5 5.5 L1 10" fill="none" stroke="#5a6978" stroke-width="1.9"/></g></svg>
<div class="a" style="left:0px;top:1020px;width:1920px;height:60px;background:linear-gradient(90deg,#221f1e 0%,#232020 10%,#2a211c 13%,#34261a 16%,#36281a 45%,#33261a 75%,#30251a 100%);"></div>
<div class="a" style="left:0px;top:1020px;width:1920px;height:1px;background:rgba(255,255,255,.10);"></div>
<svg style="left:24px;top:1035px" width="36" height="28" viewBox="0 0 36 28"><defs><linearGradient id="sun" x1="0" y1="0" x2="0.3" y2="1"><stop offset="0" stop-color="#ffc21a"/><stop offset="1" stop-color="#f07a00"/></linearGradient></defs><circle cx="16" cy="14" r="12.8" fill="url(#sun)"/>
<rect x="3" y="4.5" width="5" height="2.4" rx="1.2" fill="#f3e3bd"/><rect x="9.5" y="4.5" width="17" height="2.4" rx="1.2" fill="#f3e3bd"/>
<rect x="5" y="9.2" width="22" height="2.6" rx="1.3" fill="#f3e3bd"/>
<rect x="0" y="14" width="16" height="2.4" rx="1.2" fill="#e8d5ad"/><rect x="18.5" y="14" width="6" height="2.4" rx="1.2" fill="#e8d5ad"/>
<rect x="0" y="19" width="24" height="2.6" rx="1.3" fill="#e8d5ad"/></svg><svg style="left:503px;top:1036px" width="30" height="30" viewBox="0 0 30 30"><defs><linearGradient id="win" x1="0" y1="0" x2="1" y2="1"><stop offset="0" stop-color="#7ee6ff"/><stop offset="1" stop-color="#1797f8"/></linearGradient></defs>
<path d="M0 1.5 Q0 0 1.5 0 H14 V14 H0 Z M15.2 0 H27.5 Q29 0 29 1.5 V14 H15.2 Z M0 15.2 H14 V29 H1.5 Q0 29 0 27.5 Z M15.2 15.2 H29 V27.5 Q29 29 27.5 29 H15.2 Z" fill="url(#win)"/></svg><div class="a" style="left:549px;top:1031px;width:273px;height:38px;background:#f3f2f1;border-radius:19px"></div>
<svg style="left:562px;top:1040px" width="20" height="20" viewBox="0 0 20 20"><circle cx="8.5" cy="8.5" r="6.6" fill="none" stroke="#222" stroke-width="1.9"/><path d="M13.3 13.3 L18.3 18.3" stroke="#222" stroke-width="2.1"/></svg>
<svg style="left:753px;top:1033px" width="64" height="36" viewBox="0 0 64 36">
<path d="M10 35 Q32 22 58 35 Z" fill="#5cb85c"/>
<rect x="28" y="9" width="5" height="25" fill="#e8d2dc"/><path d="M28 9 L30.5 1 L33 9 Z" fill="#e8c9d6"/>
<rect x="22" y="17" width="5" height="17" fill="#c9b089"/><rect x="35" y="15" width="4" height="19" fill="#aac7e8"/><rect x="40" y="19" width="4" height="15" fill="#b9a3c9"/>
<path d="M26 35 L31 20 L37 35 Z" fill="#cdb7e4" opacity=".8"/>
<circle cx="10" cy="21" r="7" fill="#c98bd8"/><circle cx="15" cy="19" r="5" fill="#d8a2e2"/><rect x="9.5" y="24" width="1.5" height="10" fill="#8a5a2b"/>
<circle cx="52" cy="22" r="7" fill="#c98bd8"/><circle cx="48" cy="20" r="4.5" fill="#d8a2e2"/><rect x="51" y="25" width="1.5" height="9" fill="#8a5a2b"/>
</svg><svg style="left:838px;top:1035px" width="32" height="30" viewBox="0 0 32 30"><defs><linearGradient id="tv1" x1="0" y1="0" x2="0" y2="1"><stop offset="0" stop-color="#8a8a8a"/><stop offset="1" stop-color="#4e4e4e"/></linearGradient><linearGradient id="tv2" x1="0" y1="0" x2="1" y2="1"><stop offset="0" stop-color="#ffffff"/><stop offset="1" stop-color="#c8c8c8"/></linearGradient></defs>
<rect x="1" y="9" width="22" height="19.5" rx="2" fill="url(#tv1)"/><rect x="8.5" y="1" width="22.5" height="20.5" rx="2" fill="url(#tv2)" opacity=".95"/><rect x="8.5" y="9" width="14.5" height="12.5" fill="#b5b5b5" opacity=".9"/></svg><svg style="left:893px;top:1036px" width="32" height="28" viewBox="0 0 32 28"><path d="M0.5 2.5 Q0.5 1 2 1 H10 L13 3.5 H29.5 Q31 3.5 31 5 V26.5 H0.5 Z" fill="#e9a90b"/><rect x="0.5" y="5.5" width="30.5" height="21.5" rx="1" fill="#ffd047"/><path d="M6 27 V21.5 Q6 20 7.5 20 H24 Q25.5 20 25.5 21.5 V27 Z" fill="#1f7fd8"/><rect x="10" y="22.5" width="11.5" height="1.2" fill="#0c4f96"/></svg><svg style="left:949px;top:1035px" width="30" height="30" viewBox="0 0 30 30"><defs><linearGradient id="ed1" x1="0" y1="0" x2="1" y2="0.6"><stop offset="0" stop-color="#2aa3e6"/><stop offset=".5" stop-color="#35c0b8"/><stop offset="1" stop-color="#62d86a"/></linearGradient><linearGradient id="ed2" x1="0" y1="0" x2="0.4" y2="1"><stop offset="0" stop-color="#1d8de0"/><stop offset="1" stop-color="#0b56b0"/></linearGradient></defs>
<path d="M15 0.5 A14.5 14.5 0 0 1 29.5 15 Q29.5 19.5 26.5 21.5 Q23.5 23.5 19.5 21.5 Q22 19.5 21.5 16.5 Q20.5 12 15 11.5 Q8 11.5 5.5 18 Q3 22 4 26 Q0.5 21 0.5 15 A14.5 14.5 0 0 1 15 0.5 Z" fill="url(#ed1)"/>
<path d="M0.8 13 Q2 27 14 29.5 Q22 30.5 27.5 24 Q22 26.5 16.5 25 Q9.5 22.5 9.5 17 Q9.5 12.5 14.5 11.5 Q6 10 2.5 15 Z" fill="url(#ed2)"/>
<path d="M14.5 11.5 Q20.5 12 21.5 16.5 Q22 19.5 19.5 21.5 Q15 21 13.5 18 Q12.5 14.5 14.5 11.5 Z" fill="#34281b"/></svg><svg style="left:1004px;top:1035px" width="30" height="31" viewBox="0 0 30 31"><path d="M8 8 V2.5 Q8 1 9.5 1 H20.5 Q22 1 22 2.5 V8" fill="none" stroke="#2aa5ef" stroke-width="1.8"/><rect x="0.5" y="5" width="29" height="25" rx="3" fill="#f5f5f5"/><rect x="9.5" y="11.5" width="5" height="5" fill="#f25022"/><rect x="15.3" y="11.5" width="5" height="5" fill="#7fba00"/><rect x="9.5" y="17.3" width="5" height="5" fill="#00a4ef"/><rect x="15.3" y="17.3" width="5" height="5" fill="#ffb900"/></svg><svg style="left:1059px;top:1035px" width="30" height="30" viewBox="0 0 30 30"><defs><linearGradient id="sp" x1="0" y1="0" x2="1" y2="1"><stop offset="0" stop-color="#218c36"/><stop offset="1" stop-color="#6ac44c"/></linearGradient></defs><circle cx="12.60" cy="1.41" r="1.6" fill="#2f9a3c"/><circle cx="9.61" cy="2.30" r="1.6" fill="#2f9a3c"/><circle cx="6.89" cy="3.84" r="1.6" fill="#2f9a3c"/><circle cx="4.59" cy="5.95" r="1.6" fill="#2f9a3c"/><circle cx="2.82" cy="8.52" r="1.6" fill="#2f9a3c"/><circle cx="1.67" cy="11.43" r="1.6" fill="#2f9a3c"/><circle cx="1.21" cy="14.52" r="1.6" fill="#2f9a3c"/><circle cx="1.45" cy="17.63" r="1.6" fill="#2f9a3c"/><circle cx="2.39" cy="20.61" r="1.6" fill="#2f9a3c"/><circle cx="3.98" cy="23.31" r="1.6" fill="#2f9a3c"/><circle cx="6.13" cy="25.57" r="1.6" fill="#2f9a3c"/><circle cx="8.73" cy="27.30" r="1.6" fill="#2f9a3c"/><circle cx="11.66" cy="28.39" r="1.6" fill="#2f9a3c"/><circle cx="14.76" cy="28.80" r="1.6" fill="#2f9a3c"/><circle cx="15.5" cy="15.5" r="13.5" fill="url(#sp)"/>
<path d="M9 23 Q7 13 15 9 Q22 6 27.5 5 Q28 15 22.5 21 Q17 26 9 23 Z" fill="#8fd36b" opacity=".85"/><path d="M5.5 26 Q16 21 25.5 8" fill="none" stroke="#2a7e30" stroke-width="1.3"/></svg><div class="a" style="left:1104px;top:1025px;width:50px;height:50px;background:rgba(255,255,255,.075);border-radius:5px"></div>
<div class="a" style="left:1119px;top:1070px;width:20px;height:4px;background:#79c6ea;border-radius:2px"></div>
<svg style="left:1115.5px;top:1034.5px" width="26.5" height="30.5" viewBox="0 0 21 24"><defs><linearGradient id="brv" x1="0" y1="0" x2="0" y2="1"><stop offset="0" stop-color="#ff6a2a"/><stop offset="1" stop-color="#f13a1e"/></linearGradient></defs><path d="M5.5 0.5 H15.5 L17 2 L19.2 2.6 L20.6 4.8 L20 7 L20.6 9 L18.5 17.5 L11.2 23.2 Q10.5 23.8 9.8 23.2 L2.5 17.5 L0.4 9 L1 7 L0.4 4.8 L1.8 2.6 L4 2 Z" fill="url(#brv)"/><path d="M2.8 7.2 Q5 4.5 7.5 4.8 Q10.5 5.6 13.5 4.8 Q16 4.5 18.2 7.2 L16.5 12.5 L17 15.5 L10.5 19.5 L4 15.5 L4.5 12.5 Z" fill="#fff"/><path d="M5.5 7.5 L8.8 8.3 M15.5 7.5 L12.2 8.3" stroke="#f6502a" stroke-width="1.2"/><path d="M10.5 8.5 V12 M8.5 12.5 L10.5 11.5 L12.5 12.5 M7.5 14.5 L10.5 13.5 L13.5 14.5" fill="none" stroke="#f6502a" stroke-width="1.1"/></svg><svg style="left:1168px;top:1035px" width="32" height="31" viewBox="0 0 32 31"><path d="M22 0.5 L31 5 V26 L22 30.5 L8 17.5 L3 21.5 L0.5 20 V11 L3 9.5 L8 13.5 Z M22 8.5 L13 15.5 L22 22.5 Z" fill="#1f9cf0"/><path d="M22 0.5 L22 8.5 L13 15.5 L3 9.5 L0.5 11 V20 L3 21.5 L13 15.5 L22 22.5 V30.5 L8 17.5 L3 21.5 L0.5 20 V11 L3 9.5 L8 13.5 Z" fill="#0f74c4"/></svg><svg style="left:1224px;top:1035px" width="30" height="30" viewBox="0 0 30 30"><circle cx="15" cy="15" r="14.5" fill="#2da94f"/><path d="M15 15 L2.4 7.7 A14.5 14.5 0 0 1 27.6 7.7 Z" fill="#e33b2e"/><path d="M15 15 L27.6 7.7 A14.5 14.5 0 0 1 15 29.5 Z" fill="#fcc934"/><circle cx="15" cy="15" r="6.6" fill="#fff"/><circle cx="15" cy="15" r="5.3" fill="#1a73e8"/></svg><svg style="left:1279px;top:1035px" width="30" height="29" viewBox="0 0 30 29"><rect x="0.5" y="0.5" width="28.5" height="28" rx="2.5" fill="#245b84"/><path d="M4 6 Q8 5 12 9 Q15 13 15 18 Q17 21 20 23 Q18 23 16 21 Q14 22 13 20 Q11 15 8 12 Q6 9 4 6 Z" fill="none" stroke="#dce8f0" stroke-width="1"/><path d="M22 4 L26 8 M24 3.5 L26.5 6" stroke="#dce8f0" stroke-width="1.3"/></svg><svg style="left:1334px;top:1035px" width="30" height="30" viewBox="0 0 30 30"><circle cx="15" cy="15" r="14.5" fill="#fd6c35"/><path d="M7 23 L19 11 M19 11 L22 8" stroke="#fff" stroke-width="1.8"/><circle cx="22.5" cy="7.5" r="2.5" fill="none" stroke="#fff" stroke-width="1.2"/></svg><svg style="left:1392px;top:1035px" width="24" height="30" viewBox="0 0 24 30"><rect x="0.5" y="25" width="23" height="4.5" fill="#c0601b"/><rect x="0.5" y="2" width="23" height="25" rx="1" fill="#63c8ee"/><rect x="0.5" y="25" width="23" height="2" fill="#e6e6e6"/><circle cx="4.5" cy="2" r="1.3" fill="#1476b8"/><circle cx="9.5" cy="2" r="1.3" fill="#1476b8"/><circle cx="14.5" cy="2" r="1.3" fill="#1476b8"/><circle cx="19.5" cy="2" r="1.3" fill="#1476b8"/><rect x="4" y="8" width="16" height="1.8" fill="#0d5f9a"/><rect x="4" y="13" width="16" height="1.8" fill="#0d5f9a"/><rect x="4" y="18" width="16" height="1.8" fill="#0d5f9a"/></svg><div class="a" style="left:960px;top:1070px;width:8px;height:4px;background:#9b968f;border-radius:2px"></div>
<div class="a" style="left:1070px;top:1070px;width:8px;height:4px;background:#9b968f;border-radius:2px"></div>
<div class="a" style="left:1180px;top:1070px;width:8px;height:4px;background:#9b968f;border-radius:2px"></div>
<div class="a" style="left:1235px;top:1070px;width:8px;height:4px;background:#9b968f;border-radius:2px"></div>
<div class="a" style="left:1290px;top:1070px;width:8px;height:4px;background:#9b968f;border-radius:2px"></div>
<div class="a" style="left:1345px;top:1070px;width:8px;height:4px;background:#9b968f;border-radius:2px"></div>
<div class="a" style="left:1400px;top:1070px;width:8px;height:4px;background:#9b968f;border-radius:2px"></div>
<svg style="left:1520px;top:1045px" width="16" height="10" viewBox="0 0 16 10"><path d="M1.5 8.5 L8 2 L14.5 8.5" fill="none" stroke="#fff" stroke-width="1.7"/></svg>
<svg style="left:1557px;top:1042px" width="22" height="15" viewBox="0 0 22 15"><path d="M5 14 Q0.5 14 0.5 10.5 Q0.5 7 4.5 7 Q5.5 2.5 10 2.5 Q13.5 2.5 15 5.5 Q21.5 5.5 21.5 10 Q21.5 14 17.5 14 Z" fill="#e1e1e1"/><path d="M6 8 Q8 4 12 5" fill="none" stroke="#bfbfbf" stroke-width=".8"/></svg>
<svg style="left:1598px;top:1040px" width="22" height="21" viewBox="0 0 22 21"><path d="M10 0.5 Q14 3 19.5 3 V10 Q19.5 16 10 19.5 Q0.5 16 0.5 10 V3 Q6 3 10 0.5 Z" fill="#1b8ae0"/><path d="M10 0.5 Q6 3 0.5 3 V10 Q0.5 13 3 15 L10 10 Z" fill="#3ab0f5"/><circle cx="14.2" cy="14" r="5.6" fill="#1a9a43" stroke="#2b2116" stroke-width="1"/><path d="M11.8 14 L13.6 15.8 L16.8 12.4" fill="none" stroke="#fff" stroke-width="1.4"/></svg>
<svg style="left:1637px;top:1041px" width="22" height="17" viewBox="0 0 22 17"><path d="M1 6 Q11 -2.5 21 6" fill="none" stroke="#fff" stroke-width="1.6"/><path d="M4.5 9.2 Q11 3.5 17.5 9.2" fill="none" stroke="#fff" stroke-width="1.6"/><path d="M8 12.4 Q11 9.5 14 12.4" fill="none" stroke="#fff" stroke-width="1.6"/><circle cx="11" cy="15" r="1.5" fill="#fff"/></svg>
<svg style="left:1668px;top:1043px" width="21" height="15" viewBox="0 0 21 15"><path d="M1 4.5 H4.5 L9.5 0.8 V14.2 L4.5 10.5 H1 Z" fill="none" stroke="#fff" stroke-width="1.4" stroke-linejoin="round"/><path d="M13 4.5 L19 10.5 M19 4.5 L13 10.5" stroke="#fff" stroke-width="1.4"/></svg>
<svg style="left:1698px;top:1044px" width="21" height="13" viewBox="0 0 21 13"><rect x="0.8" y="0.8" width="16.5" height="11.4" rx="2.2" fill="none" stroke="#fff" stroke-width="1.5"/><rect x="3" y="3" width="9" height="7" rx=".8" fill="#fff"/><rect x="18.3" y="4" width="2" height="5" rx="1" fill="#fff"/></svg>
<svg style="left:1826px;top:1040px" width="20" height="20" viewBox="0 0 20 20"><path d="M2.2 15 Q3.3 13.3 3.3 11 V8 Q3.3 1.6 9.5 1.4 Q11 1.4 12 1.8" fill="none" stroke="#fff" stroke-width="1.4"/><path d="M15 9 V11 Q15 13.3 16.2 15" fill="none" stroke="#fff" stroke-width="1.4"/><path d="M1.5 15.2 H17" stroke="#fff" stroke-width="1.4"/><path d="M7 16.3 Q9.3 19.3 11.6 16.3" fill="none" stroke="#fff" stroke-width="1.3"/><path d="M7.2 6.9 H10.9 L7.2 10.8 H10.9" fill="none" stroke="#fff" stroke-width="1.3"/><path d="M13.7 1.6 H17.8 L13.7 6.6 H17.8" fill="none" stroke="#fff" stroke-width="1.5"/></svg>
<svg style="left:1865px;top:1037px" width="31" height="29" viewBox="0 0 31 29"><defs><linearGradient id="cp1" x1="0" y1="0" x2="0" y2="1"><stop offset="0" stop-color="#22b0f5"/><stop offset=".45" stop-color="#3aa88a"/><stop offset=".7" stop-color="#80bb50"/><stop offset="1" stop-color="#e8c818"/></linearGradient><linearGradient id="cp2" x1="1" y1="0" x2="0" y2="1"><stop offset="0" stop-color="#9a4cf5"/><stop offset=".55" stop-color="#d458b8"/><stop offset="1" stop-color="#f86a88"/></linearGradient><linearGradient id="cp3" x1="0" y1="0" x2="1" y2="1"><stop offset="0" stop-color="#0a3fc8"/><stop offset="1" stop-color="#1a6ee8"/></linearGradient></defs>
<path d="M17.5 0.3 Q20.5 0.3 22 3 L24.5 7.2 H18 L16 5 Z" fill="url(#cp3)"/>
<path d="M7 0.3 H17.5 Q18.6 0.3 18.2 1.5 L12.2 17.3 Q11.8 18.4 10.5 18.4 H2.2 Q0.7 18.4 1.1 17 L6 1.6 Q6.4 0.3 7 0.3 Z" fill="url(#cp1)"/>
<path d="M18.8 7.2 H27.5 Q29.2 7.2 28.8 8.8 L26.3 17.5 Q25.9 19 24.5 19 H15.6 Q14.2 19 14.6 17.6 L17.3 8.6 Q17.7 7.2 18.8 7.2 Z" fill="url(#cp2)"/>
<rect x="7.7" y="19.3" width="22.3" height="8.6" rx="2.2" fill="#ffc80a"/><text x="18.9" y="26.7" font-family="Liberation Sans" font-weight="bold" font-size="7.8" fill="#1a1a1a" text-anchor="middle" letter-spacing=".6">PRE</text></svg><svg style="left:0;top:0" width="1920" height="1080" font-family="Liberation Sans"><defs><clipPath id="clipmax" clipPathUnits="userSpaceOnUse"><rect x="1700" y="400" width="118.5" height="60"/></clipPath></defs>
<text x="46.80" y="30.10" font-size="16.13" fill="#303030" textLength="80.05" lengthAdjust="spacingAndGlyphs">Web SCADA</text>
<text x="382.80" y="80.80" font-size="18.46" fill="#202124" textLength="250.48" lengthAdjust="spacingAndGlyphs">localhost<tspan fill="#757575">:3001/ph-Tds-Meter-list</tspan></text>
<text x="1572.87" y="72.50" font-size="12.35" fill="#fff" font-weight="bold">1</text>
<text x="1830.00" y="80.80" font-size="15.99" fill="#444" textLength="28.42" lengthAdjust="spacingAndGlyphs">VPN</text>
<text x="100.60" y="140.60" font-size="23.55" fill="#1b2637" textLength="148.72" lengthAdjust="spacingAndGlyphs" stroke="#1b2637" stroke-width="0.3">Iot-Web-Scada</text>
<text x="349.30" y="144.00" font-size="19.91" fill="#1b2637" textLength="47.54" lengthAdjust="spacingAndGlyphs" stroke="#1b2637" stroke-width="0.25">Qpaix</text>
<text x="1839.00" y="141.60" font-size="14.53" fill="#fff" font-weight="bold" textLength="15.18" lengthAdjust="spacingAndGlyphs">RJ</text>
<text x="65.70" y="216.80" font-size="20.06" fill="#1b2637" textLength="87.44" lengthAdjust="spacingAndGlyphs" stroke="#1b2637" stroke-width="0.25">Dashboard</text>
<text x="65.70" y="271.80" font-size="20.06" fill="#1b2637" textLength="158.33" lengthAdjust="spacingAndGlyphs" stroke="#1b2637" stroke-width="0.25">Client Management</text>
<text x="65.70" y="326.80" font-size="20.06" fill="#1b2637" textLength="66.63" lengthAdjust="spacingAndGlyphs" stroke="#1b2637" stroke-width="0.25">Analytic</text>
<text x="65.70" y="381.80" font-size="20.06" fill="#1b2637" textLength="37.35" lengthAdjust="spacingAndGlyphs" stroke="#1b2637" stroke-width="0.25">Tank</text>
<text x="65.70" y="436.80" font-size="20.06" fill="#1b2637" textLength="46.34" lengthAdjust="spacingAndGlyphs" stroke="#1b2637" stroke-width="0.25">Pump</text>
<text x="65.70" y="491.80" font-size="20.06" fill="#1b2637" textLength="86.76" lengthAdjust="spacingAndGlyphs" stroke="#1b2637" stroke-width="0.25">Flowmeter</text>
<text x="65.70" y="546.80" font-size="20.06" fill="#1b2637" textLength="107.63" lengthAdjust="spacingAndGlyphs" stroke="#1b2637" stroke-width="0.25">ph-Tds-Meter</text>
<text x="85.00" y="601.80" font-size="20.06" fill="#1b2637" textLength="140.51" lengthAdjust="spacingAndGlyphs" stroke="#1b2637" stroke-width="0.25">ph-Tds-Meter List</text>
<text x="65.70" y="656.80" font-size="20.06" fill="#1b2637" textLength="63.58" lengthAdjust="spacingAndGlyphs" stroke="#1b2637" stroke-width="0.25">Manage</text>
<text x="65.70" y="711.80" font-size="20.06" fill="#1b2637" textLength="110.37" lengthAdjust="spacingAndGlyphs" stroke="#1b2637" stroke-width="0.25">Configuration</text>
<text x="342.00" y="208.80" font-size="21.08" fill="#637386" textLength="6.95" lengthAdjust="spacingAndGlyphs">/</text>
<text x="359.20" y="208.00" font-size="20.20" fill="#617082" textLength="145.32" lengthAdjust="spacingAndGlyphs" stroke="#617082" stroke-width="0.3">pH TDS Meter List</text>
<text x="315.40" y="998.70" font-size="19.48" fill="#1b2637" textLength="115.64" lengthAdjust="spacingAndGlyphs" stroke="#1b2637" stroke-width="0.25"><tspan fill="#777b84">Qpaix</tspan> © 2024.</text>
<text x="1487.00" y="998.60" font-size="20.06" fill="#1b2637" textLength="405.42" lengthAdjust="spacingAndGlyphs" stroke="#1b2637" stroke-width="0.25">Developed &amp; Maintained by <tspan fill="#777b84">Qpaix Infitech Pvt.Ltd.</tspan></text>
<text x="408.00" y="298.00" font-size="27.98" fill="#3b4149" textLength="204.01" lengthAdjust="spacingAndGlyphs" stroke="#3b4149" stroke-width="0.3">PhTdS Meter List</text>
<text x="1611.00" y="296.00" font-size="19.48" fill="#fff" font-weight="bold" textLength="73.96" lengthAdjust="spacingAndGlyphs">Add New</text>
<text x="410.80" y="369.80" font-size="20.20" fill="#5a6875" textLength="51.73" lengthAdjust="spacingAndGlyphs" stroke="#5a6875" stroke-width="0.4">Shows</text>
<text x="477.20" y="370.60" font-size="19.77" fill="#353c44" textLength="19.04" lengthAdjust="spacingAndGlyphs" stroke="#353c44" stroke-width="0.25">10</text>
<text x="546.00" y="369.80" font-size="20.20" fill="#5a6875" textLength="57.04" lengthAdjust="spacingAndGlyphs" stroke="#5a6875" stroke-width="0.4">Entries</text>
<text x="1451.20" y="365.50" font-size="19.48" fill="#667584" textLength="130.54" lengthAdjust="spacingAndGlyphs" stroke="#667584" stroke-width="0.2">Keyword Search</text>
<text x="404.00" y="435.40" font-size="16.57" fill="#3d4148" textLength="42.01" lengthAdjust="spacingAndGlyphs" stroke="#3d4148" stroke-width="0.35">SR No</text>
<text x="512.00" y="435.40" font-size="16.57" fill="#3d4148" textLength="99.00" lengthAdjust="spacingAndGlyphs" stroke="#3d4148" stroke-width="0.35">S/W Device Id</text>
<text x="692.00" y="435.40" font-size="16.57" fill="#3d4148" textLength="120.00" lengthAdjust="spacingAndGlyphs" stroke="#3d4148" stroke-width="0.35">Location &amp; Client</text>
<text x="872.00" y="435.40" font-size="16.57" fill="#3d4148" textLength="58.00" lengthAdjust="spacingAndGlyphs" stroke="#3d4148" stroke-width="0.35">H/W No</text>
<text x="1052.00" y="435.40" font-size="16.57" fill="#3d4148" textLength="85.98" lengthAdjust="spacingAndGlyphs" stroke="#3d4148" stroke-width="0.35">MeterName</text>
<text x="1232.00" y="435.40" font-size="16.57" fill="#3d4148" textLength="96.02" lengthAdjust="spacingAndGlyphs" stroke="#3d4148" stroke-width="0.35">ph Min Range</text>
<text x="1412.00" y="435.40" font-size="16.57" fill="#3d4148" textLength="98.99" lengthAdjust="spacingAndGlyphs" stroke="#3d4148" stroke-width="0.35">ph Max Range</text>
<text x="1592.00" y="435.40" font-size="16.57" fill="#3d4148" textLength="94.97" lengthAdjust="spacingAndGlyphs" stroke="#3d4148" stroke-width="0.35">ph Min Count</text>
<text x="1772.00" y="435.40" font-size="16.57" fill="#3d4148" textLength="98.99" lengthAdjust="spacingAndGlyphs" clip-path="url(#clipmax)" stroke="#3d4148" stroke-width="0.35">ph Max Range</text>
<text x="404.50" y="490.00" font-size="20.20" fill="#3d4550" textLength="10.25" lengthAdjust="spacingAndGlyphs" stroke="#3d4550" stroke-width="0.3">7</text>
<text x="512.00" y="490.00" font-size="20.20" fill="#3d4550" textLength="122.14" lengthAdjust="spacingAndGlyphs" stroke="#3d4550" stroke-width="0.3">Q0424XX0007</text>
<text x="692.00" y="490.00" font-size="20.20" fill="#3d4550" textLength="167.58" lengthAdjust="spacingAndGlyphs" stroke="#3d4550" stroke-width="0.3">Near IIBM - Rajeev ...</text>
<text x="872.00" y="490.00" font-size="20.20" fill="#3d4550" textLength="51.26" lengthAdjust="spacingAndGlyphs" stroke="#3d4550" stroke-width="0.3">50000</text>
<text x="1052.00" y="490.00" font-size="20.20" fill="#3d4550" textLength="74.94" lengthAdjust="spacingAndGlyphs" stroke="#3d4550" stroke-width="0.3">VK meter</text>
<text x="1232.00" y="490.00" font-size="20.20" fill="#3d4550" textLength="30.76" lengthAdjust="spacingAndGlyphs" stroke="#3d4550" stroke-width="0.3">720</text>
<text x="1412.00" y="490.00" font-size="20.20" fill="#3d4550" textLength="30.76" lengthAdjust="spacingAndGlyphs" stroke="#3d4550" stroke-width="0.3">820</text>
<text x="1592.00" y="490.00" font-size="20.20" fill="#3d4550" textLength="30.76" lengthAdjust="spacingAndGlyphs" stroke="#3d4550" stroke-width="0.3">820</text>
<text x="1772.00" y="490.00" font-size="20.20" fill="#3d4550" textLength="30.76" lengthAdjust="spacingAndGlyphs" stroke="#3d4550" stroke-width="0.3">837</text>
<text x="404.50" y="545.00" font-size="20.20" fill="#3d4550" textLength="10.25" lengthAdjust="spacingAndGlyphs" stroke="#3d4550" stroke-width="0.3">6</text>
<text x="512.00" y="545.00" font-size="20.20" fill="#3d4550" textLength="122.14" lengthAdjust="spacingAndGlyphs" stroke="#3d4550" stroke-width="0.3">Q0424XX0006</text>
<text x="692.00" y="545.00" font-size="20.20" fill="#3d4550" textLength="125.38" lengthAdjust="spacingAndGlyphs" stroke="#3d4550" stroke-width="0.3">Location2 - niks</text>
<text x="872.00" y="545.00" font-size="20.20" fill="#3d4550" textLength="41.01" lengthAdjust="spacingAndGlyphs" stroke="#3d4550" stroke-width="0.3">8373</text>
<text x="1052.00" y="545.00" font-size="20.20" fill="#3d4550" textLength="76.61" lengthAdjust="spacingAndGlyphs" stroke="#3d4550" stroke-width="0.3">OP meter</text>
<text x="1232.00" y="545.00" font-size="20.20" fill="#3d4550" textLength="30.76" lengthAdjust="spacingAndGlyphs" stroke="#3d4550" stroke-width="0.3">873</text>
<text x="1412.00" y="545.00" font-size="20.20" fill="#3d4550" textLength="41.01" lengthAdjust="spacingAndGlyphs" stroke="#3d4550" stroke-width="0.3">6363</text>
<text x="1592.00" y="545.00" font-size="20.20" fill="#3d4550" textLength="30.76" lengthAdjust="spacingAndGlyphs" stroke="#3d4550" stroke-width="0.3">737</text>
<text x="1772.00" y="545.00" font-size="20.20" fill="#3d4550" textLength="30.76" lengthAdjust="spacingAndGlyphs" stroke="#3d4550" stroke-width="0.3">773</text>
<text x="404.50" y="599.00" font-size="20.20" fill="#3d4550" textLength="10.25" lengthAdjust="spacingAndGlyphs" stroke="#3d4550" stroke-width="0.3">5</text>
<text x="512.00" y="599.00" font-size="20.20" fill="#3d4550" textLength="122.14" lengthAdjust="spacingAndGlyphs" stroke="#3d4550" stroke-width="0.3">Q0424XX0005</text>
<text x="692.00" y="599.00" font-size="20.20" fill="#3d4550" textLength="167.58" lengthAdjust="spacingAndGlyphs" stroke="#3d4550" stroke-width="0.3">Near IIBM - Rajeev ...</text>
<text x="872.00" y="599.00" font-size="20.20" fill="#3d4550" textLength="30.76" lengthAdjust="spacingAndGlyphs" stroke="#3d4550" stroke-width="0.3">876</text>
<text x="1052.00" y="599.00" font-size="20.20" fill="#3d4550" textLength="75.92" lengthAdjust="spacingAndGlyphs" stroke="#3d4550" stroke-width="0.3">FG meter</text>
<text x="1232.00" y="599.00" font-size="20.20" fill="#3d4550" textLength="41.01" lengthAdjust="spacingAndGlyphs" stroke="#3d4550" stroke-width="0.3">8364</text>
<text x="1412.00" y="599.00" font-size="20.20" fill="#3d4550" textLength="41.01" lengthAdjust="spacingAndGlyphs" stroke="#3d4550" stroke-width="0.3">7263</text>
<text x="1592.00" y="599.00" font-size="20.20" fill="#3d4550" textLength="10.25" lengthAdjust="spacingAndGlyphs" stroke="#3d4550" stroke-width="0.3">0</text>
<text x="1772.00" y="599.00" font-size="20.20" fill="#3d4550" textLength="10.25" lengthAdjust="spacingAndGlyphs" stroke="#3d4550" stroke-width="0.3">0</text>
<text x="404.50" y="653.00" font-size="20.20" fill="#3d4550" textLength="10.25" lengthAdjust="spacingAndGlyphs" stroke="#3d4550" stroke-width="0.3">4</text>
<text x="512.00" y="653.00" font-size="20.20" fill="#3d4550" textLength="122.14" lengthAdjust="spacingAndGlyphs" stroke="#3d4550" stroke-width="0.3">Q0424XX0004</text>
<text x="692.00" y="653.00" font-size="20.20" fill="#3d4550" textLength="166.50" lengthAdjust="spacingAndGlyphs" stroke="#3d4550" stroke-width="0.3">Near MG Road - Ra...</text>
<text x="872.00" y="653.00" font-size="20.20" fill="#3d4550" textLength="30.76" lengthAdjust="spacingAndGlyphs" stroke="#3d4550" stroke-width="0.3">873</text>
<text x="1052.00" y="653.00" font-size="20.20" fill="#3d4550" textLength="77.60" lengthAdjust="spacingAndGlyphs" stroke="#3d4550" stroke-width="0.3">MP meter</text>
<text x="1232.00" y="653.00" font-size="20.20" fill="#3d4550" textLength="20.50" lengthAdjust="spacingAndGlyphs" stroke="#3d4550" stroke-width="0.3">35</text>
<text x="1412.00" y="653.00" font-size="20.20" fill="#3d4550" textLength="30.76" lengthAdjust="spacingAndGlyphs" stroke="#3d4550" stroke-width="0.3">738</text>
<text x="1592.00" y="653.00" font-size="20.20" fill="#3d4550" textLength="30.76" lengthAdjust="spacingAndGlyphs" stroke="#3d4550" stroke-width="0.3">873</text>
<text x="1772.00" y="653.00" font-size="20.20" fill="#3d4550" textLength="41.01" lengthAdjust="spacingAndGlyphs" stroke="#3d4550" stroke-width="0.3">2222</text>
<text x="404.50" y="707.00" font-size="20.20" fill="#3d4550" textLength="10.25" lengthAdjust="spacingAndGlyphs" stroke="#3d4550" stroke-width="0.3">3</text>
<text x="512.00" y="707.00" font-size="20.20" fill="#3d4550" textLength="122.14" lengthAdjust="spacingAndGlyphs" stroke="#3d4550" stroke-width="0.3">Q0424XX0003</text>
<text x="692.43" y="707.00" font-size="20.20" fill="#3d4550" textLength="161.74" lengthAdjust="spacingAndGlyphs" stroke="#3d4550" stroke-width="0.3">jk Bhai - Rajeev Ga...</text>
<text x="872.00" y="707.00" font-size="20.20" fill="#3d4550" textLength="30.76" lengthAdjust="spacingAndGlyphs" stroke="#3d4550" stroke-width="0.3">771</text>
<text x="1052.00" y="707.00" font-size="20.20" fill="#3d4550" textLength="24.98" lengthAdjust="spacingAndGlyphs" stroke="#3d4550" stroke-width="0.3">HP</text>
<text x="1232.00" y="707.00" font-size="20.20" fill="#3d4550" textLength="20.50" lengthAdjust="spacingAndGlyphs" stroke="#3d4550" stroke-width="0.3">12</text>
<text x="1412.00" y="707.00" font-size="20.20" fill="#3d4550" textLength="30.76" lengthAdjust="spacingAndGlyphs" stroke="#3d4550" stroke-width="0.3">200</text>
<text x="1592.00" y="707.00" font-size="20.20" fill="#3d4550" textLength="10.25" lengthAdjust="spacingAndGlyphs" stroke="#3d4550" stroke-width="0.3">0</text>
<text x="1772.00" y="707.00" font-size="20.20" fill="#3d4550" textLength="10.25" lengthAdjust="spacingAndGlyphs" stroke="#3d4550" stroke-width="0.3">0</text>
<text x="417.80" y="791.70" font-size="15.84" fill="#5f6d7a" textLength="184.42" lengthAdjust="spacingAndGlyphs" stroke="#5f6d7a" stroke-width="0.5">Showing 1 to 5 of 5 entries</text>
<text x="1682.68" y="791.70" font-size="15.55" fill="#5c6b7a" stroke="#5c6b7a" stroke-width="0.4">1</text>
<text x="65.00" y="1044.70" font-size="15.12" fill="#ffffff" textLength="29.99" lengthAdjust="spacingAndGlyphs">39°C</text>
<text x="65.00" y="1064.70" font-size="15.12" fill="#dcdcdc" textLength="45.04" lengthAdjust="spacingAndGlyphs">Smoke</text>
<text x="594.80" y="1056.90" font-size="18.75" fill="#5d5d5d" textLength="50.18" lengthAdjust="spacingAndGlyphs">Search</text>
<text x="1780.50" y="1044.70" font-size="15.26" fill="#ffffff" textLength="34.97" lengthAdjust="spacingAndGlyphs">14:07</text>
<text x="1738.50" y="1064.80" font-size="14.97" fill="#ffffff" textLength="77.01" lengthAdjust="spacingAndGlyphs">09-05-2024</text>
</svg>
</body></html>
